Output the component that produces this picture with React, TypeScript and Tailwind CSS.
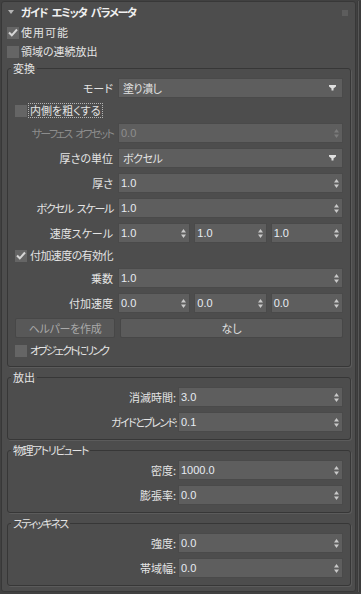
import React from "react";

const jp = "font-['Noto_Sans_CJK_JP',sans-serif] [font-feature-settings:'palt']";
const num = "font-['Liberation_Sans','DejaVu_Sans',sans-serif]";

function SpinIcon({ dim }: { dim?: boolean }) {
  return (
    <svg width="5" height="9" viewBox="0 0 5 9" className={dim ? "text-[#7c7c7c]" : "text-[#c9c9c9]"}>
      <path d="M2.5 0 L5 3.5 L0 3.5 Z" fill="currentColor" />
      <path d="M0 5.5 L5 5.5 L2.5 9 Z" fill="currentColor" />
    </svg>
  );
}

function DropIcon() {
  return (
    <svg width="7" height="6" viewBox="0 0 7 6" className="text-[#e0e0e0]">
      <path d="M0 0 H7 V1.5 L4.5 3.5 V5.5 H2.5 V3.5 L0 1.5 Z" fill="currentColor" />
    </svg>
  );
}

function Check({ checked }: { checked?: boolean }) {
  return (
    <div className="flex h-[12px] w-[12px] shrink-0 items-center justify-center bg-[#656565]">
      {checked && (
        <svg width="10" height="9" viewBox="0 0 10 9">
          <path d="M1 4.5 L3.8 7.3 L9 1.5" stroke="#d6d6d6" strokeWidth="2" fill="none" />
        </svg>
      )}
    </div>
  );
}

function Spinner({ value, dim }: { value: string; dim?: boolean }) {
  return (
    <div className="flex h-[20px] min-w-0 flex-1 items-center justify-between border border-[#4a4a4a] bg-[#5e5e5e] pl-[2px] pr-[3px]">
      <span className={`${num} text-[11px] ${dim ? "text-[#8e8e8e]" : "text-[#e7ecf3]"}`}>{value}</span>
      <SpinIcon dim={dim} />
    </div>
  );
}

function Select({ value }: { value: string }) {
  return (
    <div className="flex h-[20px] flex-1 items-center justify-between border border-[#4a4a4a] bg-[#5e5e5e] pl-[4px] pr-[6px]">
      <span className={`${jp} text-[11px] tracking-[-0.5px] text-[#e2e2e2]`}>{value}</span>
      <DropIcon />
    </div>
  );
}

function Row({
  label,
  wide,
  dim,
  t = "",
  children,
}: {
  label: string;
  wide?: boolean;
  dim?: boolean;
  t?: string;
  children: React.ReactNode;
}) {
  return (
    <div className="flex h-[20px] items-center">
      <div
        className={`${jp} shrink-0 whitespace-pre text-right text-[11px] leading-[14px] ${t} ${wide ? "w-[170px] pr-[2px]" : "w-[110px] pr-[5px]"} ${
          dim ? "text-[#8c8c8c]" : "text-[#e4e4e4]"
        }`}
      >
        {label}
      </div>
      {children}
    </div>
  );
}

function CheckRow({ label, checked, focus, t = "" }: { label: string; checked?: boolean; focus?: boolean; t?: string }) {
  return (
    <div className="flex h-[15px] items-center pl-[7px]">
      <Check checked={checked} />
      <span
        className={`${jp} ml-[1px] text-[11px] leading-[13px] text-[#e4e4e4] ${t} ${
          focus ? "border border-dotted border-[#b4b4b4] px-[1px]" : "pl-[2px]"
        }`}
      >
        {label}
      </span>
    </div>
  );
}

function Group({
  title,
  t = "",
  children,
  first,
}: {
  title: string;
  t?: string;
  children: React.ReactNode;
  first?: boolean;
}) {
  return (
    <fieldset
      className={`ml-[5px] mr-[4px] ${first ? "pb-[8px]" : "mt-[3px] pb-[7px]"} rounded-[3px] border border-[#373737] pr-[7px] pt-[3px] shadow-[1px_1px_0_#5b5b5b]`}
    >
      <legend className={`${jp} ml-[3px] px-[2px] text-[11px] leading-[14px] text-[#e4e4e4] ${t}`}>{title}</legend>
      <div className="flex flex-col gap-[5px]">{children}</div>
    </fieldset>
  );
}

export default function App() {
  return (
    <div className="flex h-[594px] w-[361px] bg-[#414141]">
      <div className="ml-[1px] mt-[1px] h-[591px] w-[355px] rounded-[3px] border border-[#383838] bg-[#4d4d4d]">
        <div className="flex h-[21px] items-center justify-between pl-[6px] pr-[7px]">
          <div className="flex items-center">
            <svg width="6" height="5" viewBox="0 0 6 5" className="text-[#b4b4b4]">
              <path d="M0 0 H6 L3 4 Z" fill="currentColor" />
            </svg>
            <span className={`${jp} ml-[7px] whitespace-pre text-[11px] font-bold tracking-[-1.2px] text-[#f0f0f0]`}>
              {"ガイド\u2002エミッタ\u2002パラメータ"}
            </span>
          </div>
          <svg width="6" height="6" viewBox="0 0 6 6" className="text-[#8e8e8e]">
            {[0, 2, 4].map((y) =>
              [0, 2, 4].map((x) => <rect key={`${x}-${y}`} x={x + 0.5} y={y + 0.5} width="1" height="1" fill="currentColor" />)
            )}
          </svg>
        </div>
        <div className="flex h-[19px] items-center pl-[5px]">
          <Check checked />
          <span className={`${jp} ml-[2px] text-[11px] tracking-[1px] text-[#e4e4e4]`}>使用可能</span>
        </div>
        <div className="flex h-[19px] items-center pl-[5px]">
          <Check />
          <span className={`${jp} ml-[2px] text-[11px] text-[#e4e4e4]`}>領域の連続放出</span>
        </div>

        <Group title="変換" first>
          <Row label="モード">
            <Select value="塗り潰し" />
          </Row>
          <CheckRow label="内側を粗くする" focus />
          <Row label={"サーフェス\u2002オフセット"} dim t="tracking-[-1.8px]">
            <Spinner value="0.0" dim />
          </Row>
          <Row label="厚さの単位">
            <Select value="ボクセル" />
          </Row>
          <Row label="厚さ">
            <Spinner value="1.0" />
          </Row>
          <Row label={"ボクセル\u2002スケール"} t="tracking-[-1.3px]">
            <Spinner value="1.0" />
          </Row>
          <Row label="速度スケール">
            <div className="grid flex-1 grid-cols-3 gap-[4px]">
              <Spinner value="1.0" />
              <Spinner value="1.0" />
              <Spinner value="1.0" />
            </div>
          </Row>
          <CheckRow label="付加速度の有効化" checked t="tracking-[-0.6px]" />
          <Row label="乗数">
            <Spinner value="1.0" />
          </Row>
          <Row label="付加速度">
            <div className="grid flex-1 grid-cols-3 gap-[4px]">
              <Spinner value="0.0" />
              <Spinner value="0.0" />
              <Spinner value="0.0" />
            </div>
          </Row>
          <div className="flex h-[20px] gap-[5px] pl-[7px]">
            <div
              className={`${jp} flex w-[100px] items-center justify-center rounded-[2px] border border-[#474747] bg-[#585858] text-[11px] tracking-[-0.3px] text-[#a9a9a9]`}
            >
              ヘルパーを作成
            </div>
            <div
              className={`${jp} flex flex-1 items-center justify-center rounded-[2px] border border-[#474747] bg-[#5b5b5b] text-[11px] text-[#e0e0e0]`}
            >
              なし
            </div>
          </div>
          <CheckRow label="オブジェクトにリンク" t="tracking-[-1.9px]" />
        </Group>

        <Group title="放出">
          <Row label="消滅時間:" wide>
            <Spinner value="3.0" />
          </Row>
          <Row label="ガイドとブレンド:" wide t="tracking-[-1.6px]">
            <Spinner value="0.1" />
          </Row>
        </Group>

        <Group title="物理アトリビュート" t="tracking-[-1.5px]">
          <Row label="密度:" wide>
            <Spinner value="1000.0" />
          </Row>
          <Row label="膨張率:" wide>
            <Spinner value="0.0" />
          </Row>
        </Group>

        <Group title="スティッキネス" t="tracking-[-1.8px]">
          <Row label="強度:" wide>
            <Spinner value="0.0" />
          </Row>
          <Row label="帯域幅:" wide>
            <Spinner value="0.0" />
          </Row>
        </Group>
      </div>
      <div className="ml-[1px] mt-[1px] flex h-[591px] w-[4px] bg-[#3b3b3b]">
        <div className="ml-[1px] w-[1px] bg-[#575757]" />
      </div>
    </div>
  );
}
